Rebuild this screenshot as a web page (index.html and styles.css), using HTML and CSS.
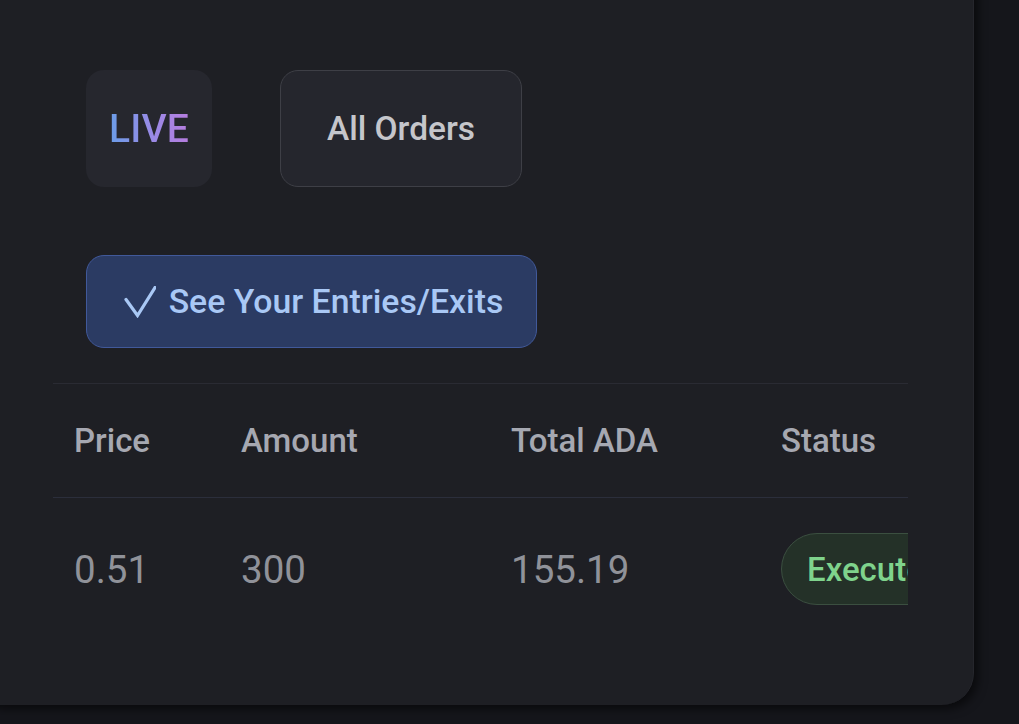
FILE: index.html
```html
<!DOCTYPE html>
<html lang="en">
<head>
<meta charset="utf-8">
<title>Orders</title>
<link rel="stylesheet" href="styles.css">
</head>
<body>
<div class="card">
  <div class="tabs">
    <div class="live"><span class="live-text">LIVE</span></div>
    <button class="all-orders">All Orders</button>
  </div>
  <button class="entries">
    <svg class="check" width="32" height="32" viewBox="0 0 32 32" aria-hidden="true">
      <polyline points="2,13.5 13.5,29.5 31,1.5" fill="none" stroke="#a9c8f5" stroke-width="3.2" stroke-linecap="round" stroke-linejoin="miter"/>
    </svg>
    <span>See Your Entries/Exits</span>
  </button>
  <div class="table">
    <div class="row head">
      <div class="cell">Price</div>
      <div class="cell">Amount</div>
      <div class="cell">Total ADA</div>
      <div class="cell">Status</div>
    </div>
    <div class="row data">
      <div class="cell">0.51</div>
      <div class="cell">300</div>
      <div class="cell">155.19</div>
      <div class="cell"><span class="pill">Executed</span></div>
    </div>
  </div>
</div>
</body>
</html>
```

FILE: styles.css
```css
html, body {
  margin: 0;
  padding: 0;
  width: 1019px;
  height: 724px;
  overflow: hidden;
  background: #15161b;
  font-family: Roboto, "Noto Sans", sans-serif;
}

.card {
  box-sizing: border-box;
  width: 1004px;
  height: 745px;
  margin-left: -30px;
  margin-top: -40px;
  padding: 110px 66px 0 83px;
  background: #1e1f24;
  border-radius: 0 0 32px 32px;
  border-right: 1px solid #25262c;
  box-shadow: 4px 4px 10px rgba(0, 0, 0, 0.55);
  display: flex;
  flex-direction: column;
  align-items: flex-start;
}

.tabs {
  display: flex;
  gap: 68px;
  margin-left: 33px;
}

.live {
  width: 126px;
  height: 117px;
  border-radius: 18px;
  background: #26272e;
  display: flex;
  align-items: center;
  justify-content: center;
}

.live-text {
  font-size: 39px;
  font-weight: 500;
  background: linear-gradient(90deg, #6a9de8 0%, #9a8ae6 55%, #b67ddf 100%);
  -webkit-background-clip: text;
  background-clip: text;
  color: transparent;
  letter-spacing: 0.2px;
}

.all-orders {
  box-sizing: border-box;
  width: 242px;
  height: 117px;
  border-radius: 18px;
  border: 1.5px solid #3e3f46;
  background: #25262d;
  color: #c5c6cb;
  font-family: Roboto, sans-serif;
  font-size: 33.5px;
  font-weight: 500;
  padding: 0;
}

.entries {
  box-sizing: border-box;
  margin-top: 68px;
  margin-left: 33px;
  width: 451px;
  height: 93px;
  border-radius: 18px;
  border: 1.5px solid #41599a;
  background: #2b3b63;
  color: #a9c8f5;
  font-family: Roboto, sans-serif;
  font-size: 33.8px;
  font-weight: 500;
  display: flex;
  align-items: center;
  justify-content: center;
  gap: 13px;
  padding: 0 0 0 4px;
}

.check {
  display: block;
  margin-top: 1px;
}

.table {
  margin-top: 35px;
  width: 855px;
  overflow: hidden;
  border-top: 1.5px solid #2a2b33;
}

.row {
  display: grid;
  grid-template-columns: 167px 270px 270px 300px;
  align-items: center;
  white-space: nowrap;
}

.cell {
  padding-left: 21px;
}

.head {
  height: 113px;
  border-bottom: 1.5px solid #2b2e3b;
  color: #a6a8b1;
  font-size: 33px;
  font-weight: 500;
}

.data {
  height: 142px;
  color: #909299;
  font-size: 38.5px;
  font-weight: 400;
}

.pill {
  display: inline-flex;
  align-items: center;
  box-sizing: border-box;
  height: 72px;
  padding: 0 26px 0 25px;
  border-radius: 36px;
  border: 1.5px solid #3b4f40;
  background: #243128;
  color: #7fd38c;
  font-size: 33px;
  font-weight: 500;
}
```
